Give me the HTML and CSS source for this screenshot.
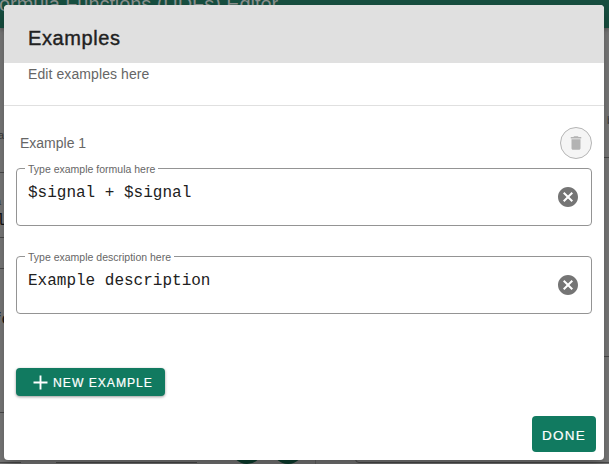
FILE: index.html
```html
<!DOCTYPE html>
<html lang="en">
<head>
<meta charset="utf-8">
<title>Formula Functions Editor</title>
<link rel="stylesheet" href="styles.css">
</head>
<body>
<div class="page" aria-hidden="true">
  <header class="appbar">ormula Functions (UDFs) Editor</header>
  <span class="frag small a">a</span>
  <span class="frag small b">a</span>
  <span class="frag mono c">l</span>
  <span class="frag mono d">fo</span>
  <span class="frag small e">b</span>
  <i class="rule r1"></i><i class="rule r2"></i><i class="rule r3"></i><i class="rule r4"></i>
  <i class="rule r6"></i><i class="rule r7"></i><i class="rule r8"></i><i class="rule r9"></i><i class="panel"></i>
  <i class="fab f1"></i><i class="fab f2"></i>
</div>
<div class="overlay">
  <section class="dialog" role="dialog" aria-labelledby="title">
    <h2 class="title" id="title"><span>Examples</span></h2>
    <p class="subtitle"><span>Edit examples here</span></p>
    <div class="content">
      <div class="row">
        <span class="name">Example 1</span>
        <button class="delete" disabled aria-label="Delete">
          <svg width="18" height="18" viewBox="0 0 24 24"><path fill="currentColor" d="M6 19c0 1.100.9 2 2 2h8c1.100 0 2-.9 2-2V7H6v12zM19 4h-3.500l-1-1h-5l-1 1H5v2h14V4z"/></svg>
        </button>
      </div>
      <fieldset class="field">
        <legend><span>Type example formula here</span></legend>
        <div class="control"><span class="value">$signal + $signal</span>
          <svg class="clear" width="24" height="24" viewBox="0 0 24 24"><path fill="currentColor" d="M12 2C6.470 2 2 6.470 2 12s4.470 10 10 10 10-4.470 10-10S17.530 2 12 2zm5 13.590L15.590 17 12 13.410 8.410 17 7 15.590 10.590 12 7 8.410 8.410 7 12 10.590 15.590 7 17 8.410 13.410 12 17 15.590z"/></svg>
        </div>
      </fieldset>
      <fieldset class="field">
        <legend><span>Type example description here</span></legend>
        <div class="control"><span class="value">Example description</span>
          <svg class="clear" width="24" height="24" viewBox="0 0 24 24"><path fill="currentColor" d="M12 2C6.470 2 2 6.470 2 12s4.470 10 10 10 10-4.470 10-10S17.530 2 12 2zm5 13.590L15.590 17 12 13.410 8.410 17 7 15.590 10.590 12 7 8.410 8.410 7 12 10.590 15.590 7 17 8.410 13.410 12 17 15.590z"/></svg>
        </div>
      </fieldset>
      <button class="btn add">
        <svg width="15" height="15" viewBox="0 0 15 15"><path d="M7.500 .5v14M.5 7.500h14" stroke="currentColor" stroke-width="1.900"/></svg>
        <span>NEW EXAMPLE</span>
      </button>
    </div>
    <footer class="actions"><button class="btn done"><span>DONE</span></button></footer>
  </section>
</div>
</body>
</html>
```
FILE: styles.css
```css
* { box-sizing: border-box; }
body {
  margin: 0;
  height: 464px;
  overflow: hidden;
  font-family: "Liberation Sans", Arial, sans-serif;
  color: #212121;
}
h2, p, fieldset, legend { margin: 0; padding: 0; font-weight: 400; }
button { border: 0; padding: 0; font: inherit; }

.page {
  position: relative;
  height: 464px;
  overflow: hidden;
  background: #7b7b7b;
}
.appbar {
  height: 28px;
  background: #174f40;
  color: #8c918f;
  font-size: 20px;
  line-height: 8px;
  letter-spacing: -.07px;
  text-indent: -1px;
  box-shadow: 0 1px 5px rgba(0, 0, 0, .35);
  white-space: nowrap;
}
.frag { position: absolute; color: #3c3c3c; line-height: 1; }
.small { font-size: 11px; }
.mono { font-family: "Liberation Mono", monospace; font-size: 16px; color: #111; }
.a { left: -2px; top: 130px; }
.b { left: -5px; top: 196px; }
.c { left: -4px; top: 213px; }
.d { left: -8px; top: 312px; }
.e { left: 607px; top: 115px; }
.rule { position: absolute; height: 1px; background: #4c4c4c; }
.r1 { left: 0; top: 172px; width: 8px; }
.r2 { left: 0; top: 268px; width: 8px; }
.r3 { left: 0; top: 412px; width: 8px; }
.r4 { left: 600px; top: 157px; width: 9px; }
.r6 { left: 0; top: 462px; width: 21px; }
.r7 { left: 56px; top: 462px; width: 141px; }
.r8 { left: 0; top: 237px; width: 8px; }
.r9 { left: 315px; top: 440px; width: 1px; height: 24px; background: #666; }
.panel { position: absolute; left: 355px; top: 356px; width: 264px; height: 107px; border: 1px solid #4c4c4c; border-radius: 4px; }
.fab { position: absolute; top: 432px; width: 32px; height: 32px; border-radius: 50%; background: #0c4030; }
.f1 { left: 231px; }
.f2 { left: 272px; }

.overlay {
  position: absolute;
  inset: 0;
  padding: 5px 5px 4px 4px;
}
.dialog {
  display: flex;
  flex-direction: column;
  height: 455px;
  overflow: hidden;
  background: #fff;
  border-radius: 4px;
  box-shadow: 0 8px 14px 0 rgba(0, 0, 0, .3);
}
.title {
  height: 58px;
  padding: 17px 24px 0;
  background: #e0e0e0;
  font-size: 20px;
  line-height: 32px;
  letter-spacing: .6px;
  -webkit-text-stroke: .4px currentColor;
}
.subtitle {
  height: 43px;
  padding: 1px 24px 0;
  border-bottom: 1px solid #e0e0e0;
  color: #666;
  font-size: 14px;
  line-height: 20px;
  letter-spacing: .09px;
}
.content { flex: 1; padding: 21px 12px 0; }
.row { display: flex; align-items: center; justify-content: space-between; height: 32px; padding-left: 4px; margin-bottom: 4px; }
.name { color: #666; font-size: 14px; }
.delete {
  display: grid;
  place-items: center;
  width: 32px;
  height: 32px;
  border: 1px solid #b5b5b5;
  border-radius: 50%;
  background: #f5f5f5;
  color: #b3b3b3;
}
.field {
  height: 63px;
  margin-bottom: 25px;
  padding: 0 8px;
  border: 1px solid #949494;
  border-radius: 4px;
}
.field legend {
  height: 11px;
  padding: 0 3px;
  color: #666;
  font-size: 10.500px;
  line-height: 12px;
}
.control { display: flex; justify-content: space-between; padding: 7px 3px 0; }
.value { margin-top: 2px; font: 16px/20px "Liberation Mono", monospace; white-space: pre; }
.clear { color: #757575; margin-top: 4px; }
.btn {
  display: flex;
  align-items: center;
  justify-content: center;
  border-radius: 4px;
  background: #117a60;
  color: #fff;
  -webkit-text-stroke: .2px currentColor;
}
.add {
  width: 149px;
  height: 28px;
  gap: 5px;
  margin-top: 54px;
  padding-left: 5px;
  font-size: 12.200px;
  letter-spacing: .95px;
  box-shadow: 0 1px 3px rgba(0, 0, 0, .4);
}
.add span { padding-top: 1px; }
.actions { display: flex; justify-content: flex-end; padding: 8px; }
.done { width: 64px; height: 36px; padding-top: 2px; font-size: 13.500px; letter-spacing: 1.200px; }
```
